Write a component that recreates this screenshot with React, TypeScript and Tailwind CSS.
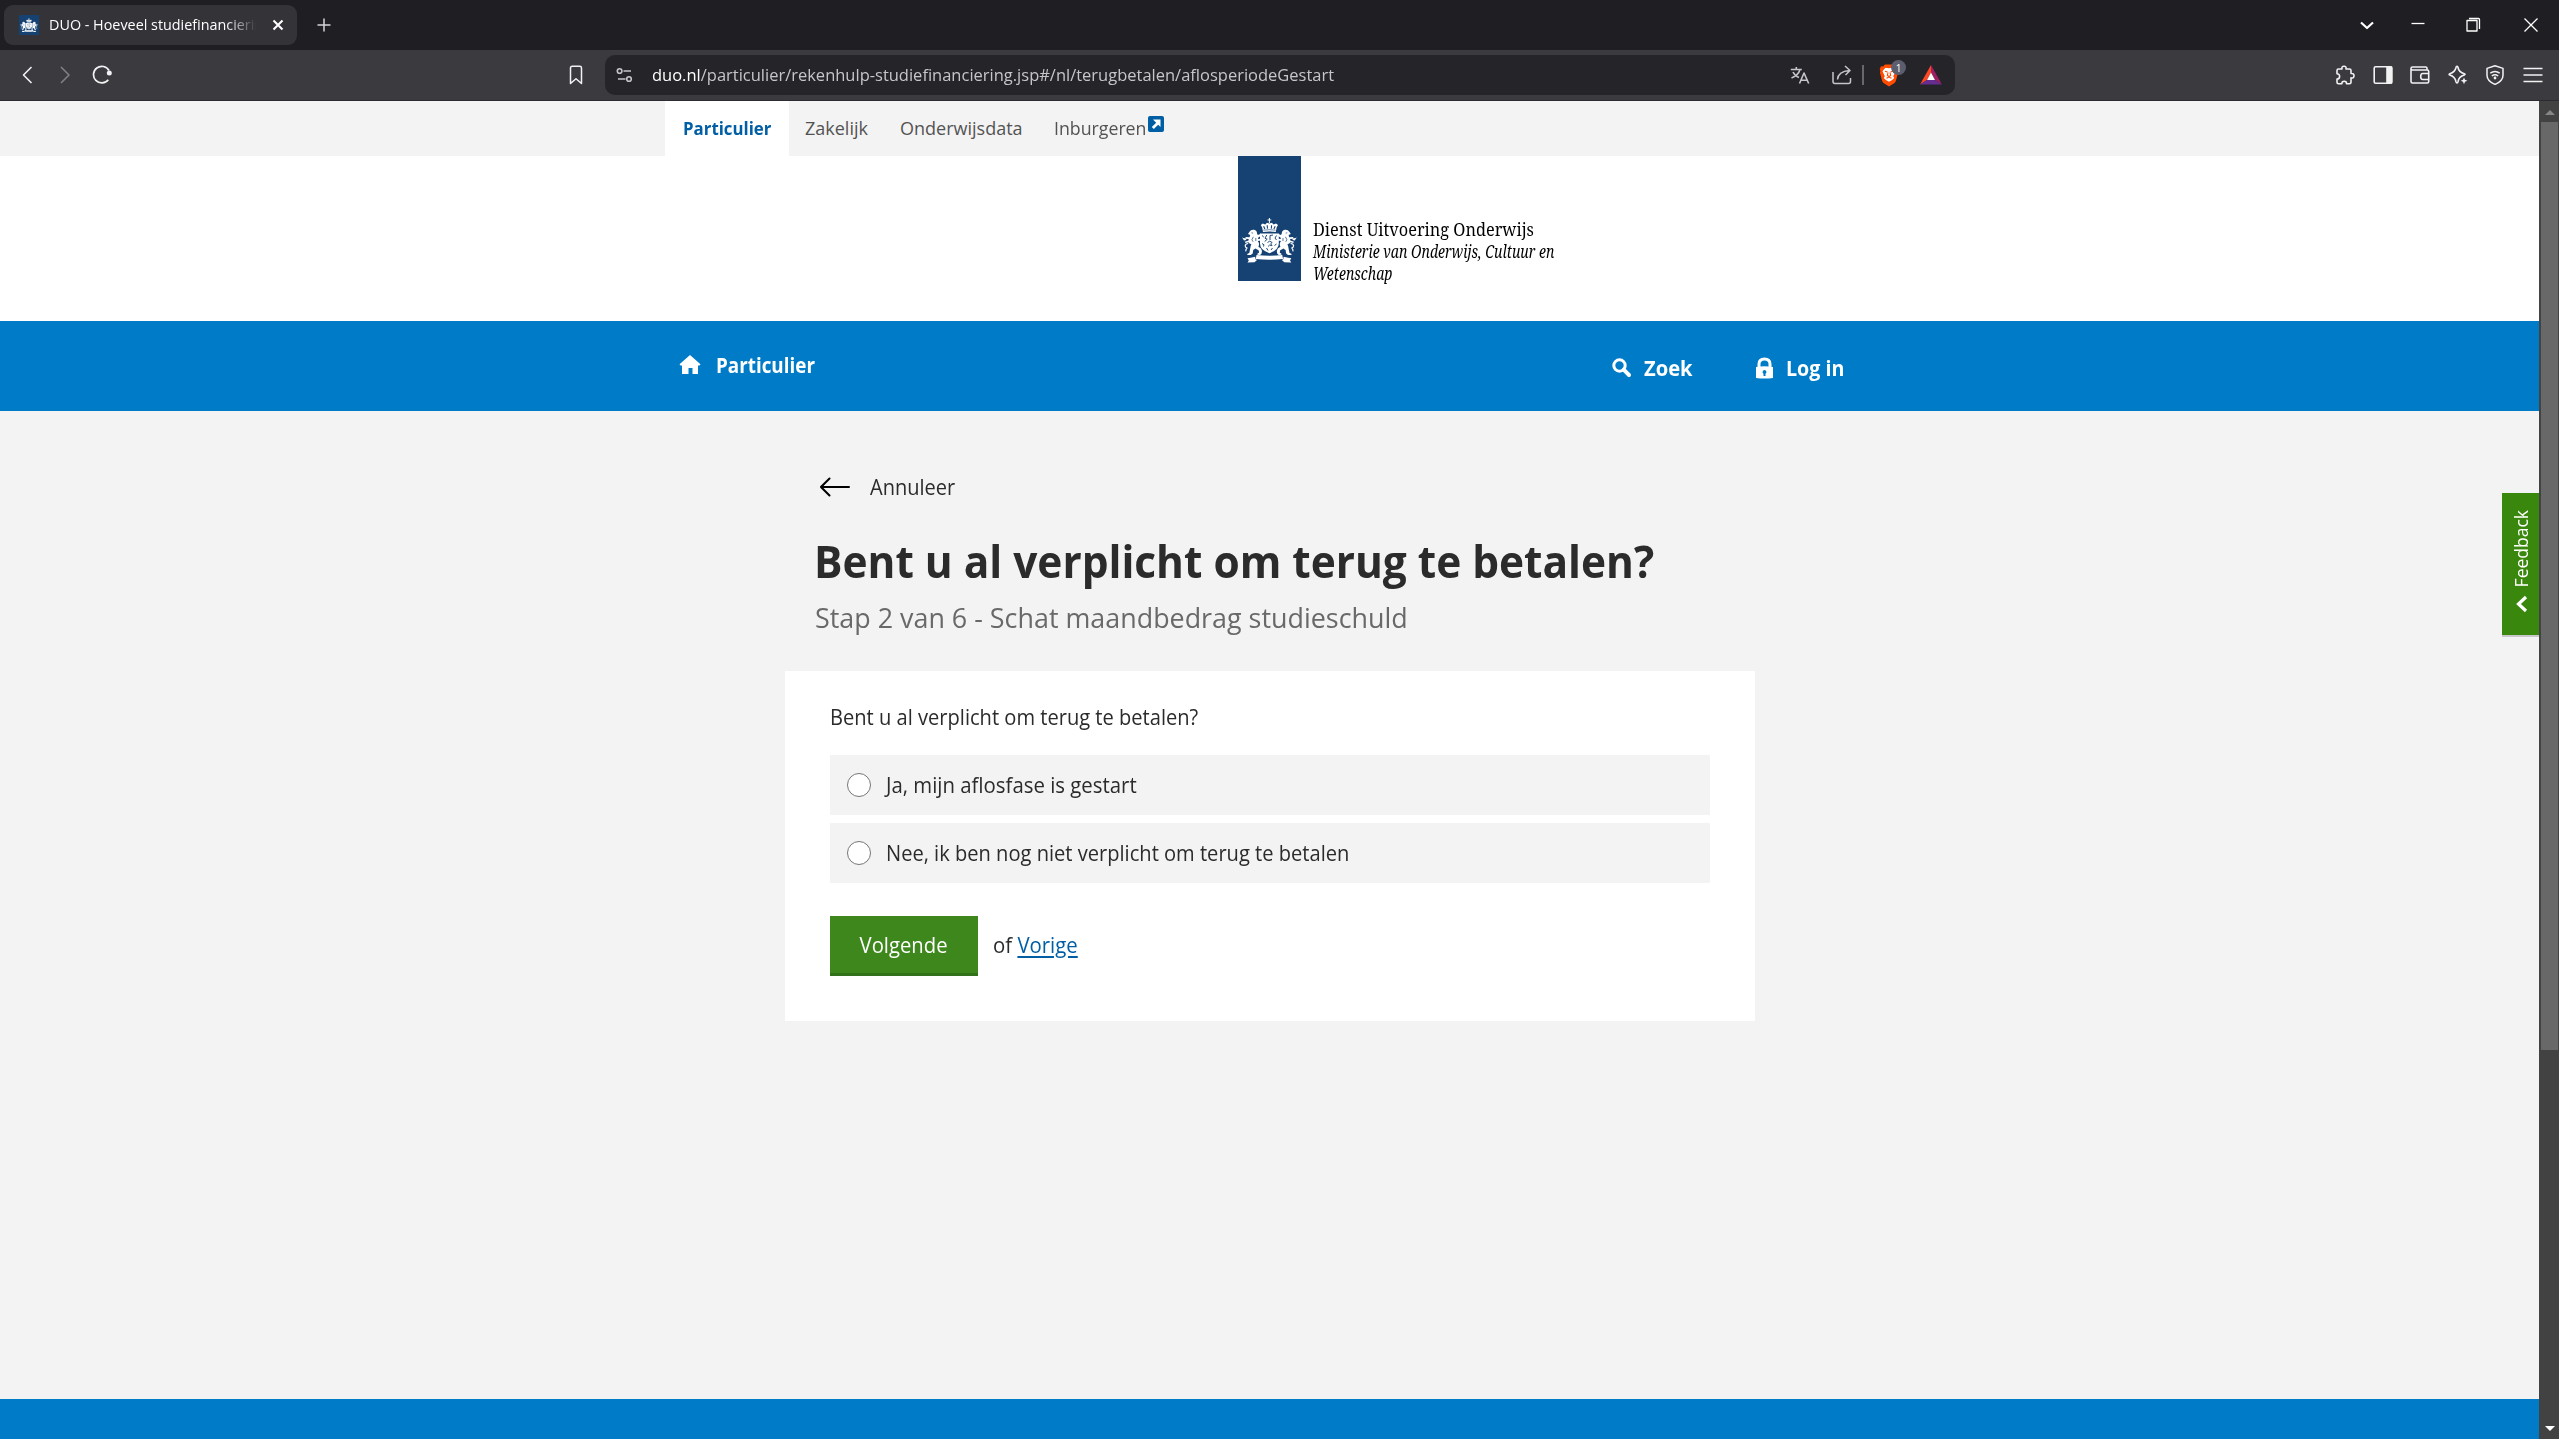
import type { ReactNode } from "react";

function Crest({ className }: { className: string }) {
  const lion = (
    <g>
      <path d="M7.500 13.800Q9 11.200 12 11.800q3 .7 3 3.700l.8 1.500 3-1.200.5 2-3 1.700-.3 1.500 2.800-.2v1.800l-3 .5q2.200 2.800.6 5.600l2.600 1.900q1.400 1.800.6 5l-1.500 1.400-2.800-.2.2-1.200 1.500-.8-.2-2.400-3.300-1.800-2.300 1.400-.5 3.500-1.900 1.600-3.600-.1.300-1.300 1.800-.8.700-3.300Q8.300 28 9.400 26.300q-2.200-.4-3-2L3.600 25l-.8-1.300 3.700-1.300.2-1.300-3.200-.4.1-1.600 4 .2.600-2.200L6 16z" />
      <path d="M0 19.200l1.200.9 3 .4v1.600L2 22.600l-.6-1.200z" />
      <path d="M6.200 25.500q-2.800.2-3 2.200 0 1.600 1.700 2.300-1.500 1.600-1 3.400" fill="none" stroke="currentColor" strokeWidth="1.200" />
      <path d="M9.500 14.800l1.600.3M11.300 18.800l-1.400 3 1.200 2M13.800 20v3" fill="none" stroke="#154273" strokeWidth=".7" />
    </g>
  );
  return (
    <svg viewBox="0 0 55 45" className={className} fill="currentColor" aria-hidden="true">
      <path d="M26.900 0h1v1.500h1.400v1h-1.400V5h-1V2.500h-1.400v-1h1.400z" />
      <path d="M21 14l-.8-4.500L18.800 7l2-1.600 2.400 1L25 4.800l2.400.8 2.400-.8 1.800 1.600 2.400-1 2 1.600-1.400 2.500-.8 4.500q-6.400-1-12.800 0z" />
      <path d="M21.600 8.300l1.300 2.800M25.200 7.300l.3 3.300M29.600 7.300l-.3 3.300M33.200 8.300l-1.300 2.800" stroke="#154273" strokeWidth="1.100" />
      <path d="M21.200 12.200q6.200-1 12.400 0" stroke="#154273" strokeWidth=".6" fill="none" />
      {lion}
      <g transform="translate(54.800 0) scale(-1 1)">{lion}</g>
      <path d="M18 15.500h18.800v10q0 6.500-9.400 9.800-9.400-3.300-9.400-9.800z" />
      <path d="M20 17.500l1.800 1.600M24.800 17l-1.800 3.200 2.200 1-2.500 2.300M31 17l-3 .5v4.500M34.500 17.500l-1.500 2.500 1.500 2M20 25.500l2 1.300-.5 1.700M34.500 26l-2 1.500M24.500 30l1.500 2.500M30.500 30l-1.500 2" stroke="#154273" strokeWidth=".95" fill="none" />
      <path d="M25.500 24.500l2.200-1.300 2.500 1.300-1.500 1.200 1.300 2-2.500-.6-1.500 1.400" stroke="#154273" strokeWidth=".9" fill="none" />
      <path d="M14.500 37q13 1.600 25.800 0l.7 4q-13.800 1.400-27.200 0z" />
      <path d="M5.500 40.200l3-.4 4.700-1.100.3 2.600 1.500.8-2.500 2.200-7 .3 1.300-2.200zM49.300 40.200l-3-.4-4.700-1.100-.3 2.600-1.500.8 2.500 2.200 7 .3-1.300-2.200z" />
    </svg>
  );
}

function Stroke({ className, width = 1.5, children }: { className: string; width?: number; children: ReactNode }) {
  return (
    <svg viewBox="0 0 20 20" className={className} fill="none" stroke="currentColor" strokeWidth={width} strokeLinejoin="round" aria-hidden="true">
      {children}
    </svg>
  );
}

function TabStrip() {
  return (
    <div className="flex h-[50px] items-center bg-[#1f1e23] pl-[4px] pr-[22px] text-white">
      <div className="flex h-[40px] w-[293px] items-center rounded-[9px] bg-[#343338] pl-[15px]">
        <div className="flex size-[20px] items-center justify-center bg-[#154273]">
          <Crest className="w-[18px] text-white" />
        </div>
        <div className="ml-[10px] -mt-[2px] w-[217px] origin-left scale-x-[0.957] overflow-hidden whitespace-nowrap text-[15px] leading-[24px] [mask-image:linear-gradient(to_right,black_85%,transparent)]">
          DUO - Hoeveel studiefinanciering
        </div>
        <Stroke className="ml-[2px] size-[20px]" width={2.1}>
          <path d="M5.500 5.500l9 9M14.500 5.500l-9 9" />
        </Stroke>
      </div>
      <Stroke className="ml-[17px] size-[20px] text-[#d6d6d8]" width={1.5}>
        <path d="M10 3.500v13M3.500 10h13" />
      </Stroke>
      <div className="ml-auto flex items-center gap-[35px]">
        <Stroke className="-mr-[4px] size-[20px]" width={2.2}>
          <path d="M4 7.500l6 5.500 6-5.500" />
        </Stroke>
        <Stroke className="size-[20px]" width={1.3}>
          <path d="M3.500 8.500h13" />
        </Stroke>
        <Stroke className="size-[20px]" width={1.3}>
          <path d="M4 5.500h10v10.500H4zM6 3.500h9.500q1 0 1 1V14" />
        </Stroke>
        <Stroke className="ml-[3px] -mr-[4px] size-[20px]" width={1.3}>
          <path d="M3.500 3.500l13 13M16.500 3.500l-13 13" />
        </Stroke>
      </div>
    </div>
  );
}

function Toolbar() {
  return (
    <div className="flex h-[51px] items-center border-b border-[#2c2b30] bg-[#3b3a3f] pl-[17px] pr-[16px] text-[#f2f2f3]">
      <Stroke className="size-[20px]" width={1.6}>
        <path d="M14.500 2L6.500 10l8 8" />
      </Stroke>
      <Stroke className="ml-[18px] size-[20px] text-[#818085]" width={1.6}>
        <path d="M6 2l8 8-8 8" />
      </Stroke>
      <Stroke className="ml-[17px] size-[20px]" width={1.7}>
        <path d="M16.300 14.800A8.300 8.300 0 1 1 17 5.500" />
        <circle cx="17.300" cy="8" r="2.500" fill="currentColor" stroke="none" />
      </Stroke>
      <Stroke className="ml-[454px] size-[20px]" width={1.5}>
        <path d="M4.500 18.500V3q0-1.700 1.700-1.700h7.600q1.700 0 1.700 1.700v15.500L10 13.800z" />
      </Stroke>
      <div className="ml-[19px] flex h-[40px] w-[1350px] items-center rounded-[10px] bg-[#252428] pl-[10px] pr-[13.500px] text-[#c6c6c9]">
        <Stroke className="size-[20px]" width={1.6}>
          <circle cx="4.600" cy="6" r="2.300" />
          <path d="M8.500 6H16M3 14h7.500" />
          <circle cx="14" cy="14" r="2.300" />
        </Stroke>
        <div className="ml-[17px] origin-left scale-x-[0.970] whitespace-nowrap pb-px text-[17px] leading-[24px]">
          <span className="text-white">duo.nl</span>/particulier/rekenhulp-studiefinanciering.jsp#/nl/terugbetalen/aflosperiodeGestart
        </div>
        <div className="ml-auto flex items-center">
          <Stroke className="size-[20px]" width={1.6}>
            <path d="M.8 4.500h11M6.300 2v2.500M10 4.500Q8.500 10 1.500 13M3 7q2 4 6 5.500M9.500 18.500L14 8l4.700 10.500M11 15.300h6.200" />
          </Stroke>
          <Stroke className="ml-[22px] size-[20px]" width={1.5}>
            <path d="M1 7v9.500q0 2 2 2h13.500q2 0 2-2V13M5.500 14.500Q6 6.500 17.500 5.500M13 1l5 4.500-4.500 4.500" />
          </Stroke>
          <div className="ml-[10px] h-[20px] w-[1.500px] bg-[#68676c]" />
          <div className="relative ml-[15.500px]">
            <svg viewBox="0 0 20 24" className="h-[24px] w-[20px]" aria-hidden="true">
              <path d="M6 1.500h8l2 2 2-.3 1.300 3-.7 1.700.5 1.500-2.200 8.300q-.5 1.500-1.800 2.500L10 23.500l-5.100-3.300q-1.300-1-1.800-2.500L.9 9.400l.5-1.500-.7-1.700L2 3.200l2 .3z" fill="#ff4c00" />
              <path d="M10 5.200l-3.500-.4L3.500 8l1 2.500 1.300 2.800-1 1.700 2 2L10 18.800l3.200-1.800 2-2-1-1.700 1.300-2.800 1-2.500-3-3.200z" fill="#fff" />
              <path d="M6 8.300l2.500.8M14 8.300l-2.500.8M9 9.500l-.6 3L10 13.500l1.600-1-.6-3M7.500 15.300L10 14l2.500 1.300" stroke="#ff4c00" strokeWidth="1.100" fill="none" />
            </svg>
            <span className="absolute -top-[3px] left-[12px] flex size-[15px] items-center justify-center rounded-full bg-[#5c5e6e] text-[10px] leading-none text-white">1</span>
          </div>
          <svg viewBox="0 0 22 20" className="ml-[20.500px] h-[20px] w-[22px]" aria-hidden="true">
            <path d="M11 0L0 19.500 7 15l4-7.500z" fill="#ff4724" />
            <path d="M11 0l11 19.500L15 15l-4-7.500z" fill="#9e1f63" />
            <path d="M0 19.500h22L15 15H7z" fill="#662d91" />
            <path d="M11 7.500L7 15h8z" fill="#fff" />
          </svg>
        </div>
      </div>
      <div className="ml-auto flex items-center gap-[17.600px]">
        <Stroke className="size-[20px]" width={1.6}>
          <path d="M2 5.500q0-1.500 1.500-1.500H7q-.6-2.800 2-2.800T11 4h3.500Q16 4 16 5.500v3q3-.4 3 2.200t-3 2.200v4.300q0 1.500-1.500 1.500H11.500q.2-2.400-2.300-2.400t-2.300 2.400H3.500Q2 18.700 2 17.200V14q2.600 0 2.600-2.600T2 8.800z" />
        </Stroke>
        <Stroke className="size-[20px]" width={1.6}>
          <rect x="1.200" y="1.800" width="17.600" height="16.400" rx="1.500" />
          <path d="M14 2h4.500v16H14z" fill="currentColor" />
        </Stroke>
        <Stroke className="size-[20px]" width={1.6}>
          <path d="M17 5V3.300Q17 2 15.700 2H2.500Q1 2 1 3.500v13Q1 18 2.500 18h14.700q1.500 0 1.500-1.500V6.500Q18.700 5 17.200 5H2.500Q1 5 1 3.800M18.700 8.500h-6q-2 0-2 3t2 3h6z" />
        </Stroke>
        <Stroke className="size-[20px]" width={1.6}>
          <path d="M9 1.300q.8 0 1 1.200.8 4.700 6.300 6.300 1.400.5 0 1.200-2.800.9-4.300 2.300-1.400 1.600-2 4.400-.3 1.200-1 1.200t-1-1.200Q7 11.500 1.800 10q-1.400-.5 0-1.200Q7 7.200 8 2.500q.2-1.200 1-1.200z" />
          <path d="M16 12.500l1 2.300 2.400 1-2.400 1-1 2.400-1-2.400-2.300-1 2.300-1z" fill="currentColor" stroke="none" />
        </Stroke>
        <Stroke className="size-[20px]" width={1.5}>
          <path d="M10 .8l8 2.600v6.800q0 5.800-8 9.200-8-3.400-8-9.200V3.400zM5.300 8.200q4.700-3.400 9.400 0M6.800 11q3.200-2.300 6.400 0" />
          <circle cx="10" cy="13" r="1.400" fill="currentColor" stroke="none" />
        </Stroke>
        <Stroke className="size-[20px]" width={1.5}>
          <path d="M.5 3.500h19M.5 10h19M.5 16.500h19" />
        </Stroke>
      </div>
    </div>
  );
}

function SiteTabs() {
  return (
    <nav className="flex h-[55px] shrink-0 bg-[#f3f3f3] pl-[665px] text-[18px] leading-[54px] text-[#535353]">
      <a className="w-[124px] bg-white pl-[18px] font-bold text-[#005ea5]">
        <span className="inline-block origin-left scale-x-[0.935]">Particulier</span>
      </a>
      <a className="ml-[16px] w-[95px]">Zakelijk</a>
      <a className="w-[154px]">Onderwijsdata</a>
      <a className="flex">
        <span className="w-[92px] origin-left scale-x-[0.985]">Inburgeren</span>
        <svg viewBox="0 0 16 16" className="ml-[2px] mt-[15px] size-[16px]" aria-hidden="true">
          <rect width="16" height="16" rx="2" fill="#005ea5" />
          <path d="M5 3.500h7.500V11l-2.300-2.300-4.400 4.400-2-2 4.400-4.400z" fill="#fff" />
        </svg>
      </a>
    </nav>
  );
}

function LogoBar() {
  return (
    <header className="flex h-[165px] shrink-0 bg-white pl-[1238px] font-['Noto_Serif',serif] text-black">
      <div className="h-[125px] w-[63px] bg-[#154273] pl-[4px] pt-[62px]">
        <Crest className="h-[45px] w-[55px] text-white" />
      </div>
      <div className="ml-[12px] whitespace-nowrap pt-[62px] text-[17.500px] leading-[22px]">
        <div className="origin-left scale-x-[0.932]">Dienst Uitvoering Onderwijs</div>
        <div className="origin-left scale-x-[0.804] italic">Ministerie van Onderwijs, Cultuur en</div>
        <div className="origin-left scale-x-[0.804] italic">Wetenschap</div>
      </div>
    </header>
  );
}

function BlueNav() {
  return (
    <nav className="flex h-[90px] shrink-0 items-center bg-[#007bc7] pl-[679px] text-[21px] font-bold leading-[30px] text-white">
      <a className="-mt-[3px] flex w-[933px] items-center">
        <svg viewBox="0 0 22 20" className="h-[20px] w-[22px]" fill="currentColor" aria-hidden="true">
          <path d="M11 0l10.500 9.200-1 1.300H19V19h-5.500v-6h-4v6H3v-8.500H1.500L.5 9.200z" />
        </svg>
        <span className="ml-[15px] origin-left scale-x-[0.897]">Particulier</span>
      </a>
      <a className="mt-[3px] flex w-[144px] items-center">
        <svg viewBox="0 0 20 20" className="size-[20px]" fill="none" stroke="currentColor" aria-hidden="true">
          <circle cx="7.500" cy="7.500" r="5.700" strokeWidth="3" />
          <path d="M11.700 11.700l5.300 5.300" strokeWidth="4" strokeLinecap="round" />
        </svg>
        <span className="ml-[12px] origin-left scale-x-[0.960]">Zoek</span>
      </a>
      <a className="mt-[3px] flex items-center">
        <svg viewBox="0 0 17 22" className="h-[22px] w-[17px]" aria-hidden="true">
          <path d="M3 12V7q0-5 5.500-5T14 7v5" fill="none" stroke="currentColor" strokeWidth="3" />
          <path d="M0 10q8.500-1.500 17 0v11q-8.500 1-17 0z" fill="currentColor" />
          <path d="M8.500 13a2 2 0 0 1 1 3.700V19h-2v-2.300a2 2 0 0 1 1-3.700z" fill="#007bc7" />
        </svg>
        <span className="ml-[13px] origin-left scale-x-[0.935]">Log in</span>
      </a>
    </nav>
  );
}

const options = [
  { label: "Ja, mijn aflosfase is gestart", fit: "scale-x-[0.970]" },
  { label: "Nee, ik ben nog niet verplicht om terug te betalen", fit: "scale-x-[0.957]" },
];

function Step() {
  return (
    <main className="min-h-0 flex-1 bg-[#f3f3f3] pl-[785px] pt-[61px] text-[21px] leading-[30px] text-[#2b2b2b]">
      <div className="pl-[30px]">
        <a className="flex items-center pl-[5px]">
          <svg viewBox="0 0 30 20" className="h-[20px] w-[30px]" fill="none" stroke="#000" strokeWidth="2" strokeLinecap="round" aria-hidden="true">
            <path d="M1 10h28M9.500 1.500L1 10l8.500 8.500" />
          </svg>
          <span className="ml-[20px] origin-left scale-x-[0.953]">Annuleer</span>
        </a>
        <h1 className="-ml-[1px] mt-[29px] origin-left whitespace-nowrap">
          <span className="inline-block origin-left scale-x-[0.942] text-[45px] font-bold leading-[60px]">Bent u al verplicht om terug te betalen?</span>
        </h1>
        <p className="mt-[6px]">
          <span className="inline-block origin-left scale-x-[0.960] text-[28px] leading-[40px] text-[#696969]">Stap 2 van 6 - Schat maandbedrag studieschuld</span>
        </p>
      </div>
      <form className="mt-[34px] w-[970px] bg-white pb-[45px] pl-[45px] pt-[31px]">
        <p className="origin-left">
          <span className="inline-block origin-left scale-x-[0.957]">Bent u al verplicht om terug te betalen?</span>
        </p>
        <div className="mt-[23px] flex w-[880px] flex-col gap-[8px]">
          {options.map((o) => (
            <label key={o.label} className="flex h-[60px] items-center bg-[#f3f3f3] pl-[17px]">
              <span className="size-[24px] rounded-full border-[1.500px] border-[#767676] bg-white" />
              <span className={"ml-[15px] origin-left " + o.fit}>{o.label}</span>
            </label>
          ))}
        </div>
        <div className="mt-[33px] flex items-center">
          <span className="flex h-[60px] w-[148px] items-center justify-center border-b-[3px] border-[#33701a] bg-[#3e871d] font-medium text-white">
            <span className="scale-x-[0.965]">Volgende</span>
          </span>
          <span className="-mt-[3px] ml-[15px] origin-left scale-x-[0.970] whitespace-pre">
            of <a className="text-[#005ea5] underline decoration-2 underline-offset-[3px]">Vorige</a>
          </span>
        </div>
      </form>
    </main>
  );
}

export default function App() {
  return (
    <div className="flex h-[1439px] w-[2559px] flex-col overflow-hidden font-['Open_Sans','Noto_Sans',sans-serif]">
      <TabStrip />
      <Toolbar />
      <div className="flex min-h-0 flex-1">
        <div className="relative flex w-[2539px] flex-col">
          <SiteTabs />
          <LogoBar />
          <BlueNav />
          <Step />
          <footer className="h-[40px] shrink-0 bg-[#007bc7]" />
          <div className="absolute right-0 top-[392px] flex h-[144px] w-[37px] flex-col items-center border-b-2 border-[#c8c8c8] bg-[#39870c] pt-[17px] text-white">
            <span className="rotate-180 pr-px text-[17.500px] leading-[30px] [writing-mode:vertical-rl]">Feedback</span>
            <svg viewBox="0 0 14 18" className="ml-[2px] mt-[8px] h-[18px] w-[14px]" fill="none" stroke="currentColor" strokeWidth="3.200" aria-hidden="true">
              <path d="M11 2L3.500 9l7.500 7" />
            </svg>
          </div>
        </div>
        <div className="flex w-[20px] flex-col items-center bg-[#424242] pb-[8px] pt-[9px]">
          <svg viewBox="0 0 10 5" className="ml-px h-[5px] w-[10px]" aria-hidden="true">
            <path d="M5 0l5 5H0z" fill="#868686" />
          </svg>
          <div className="mt-[7px] h-[928px] w-[17px] bg-[#686868]" />
          <svg viewBox="0 0 10 5" className="ml-px mt-auto h-[5px] w-[10px]" aria-hidden="true">
            <path d="M0 0h10L5 5z" fill="#fff" />
          </svg>
        </div>
      </div>
    </div>
  );
}
